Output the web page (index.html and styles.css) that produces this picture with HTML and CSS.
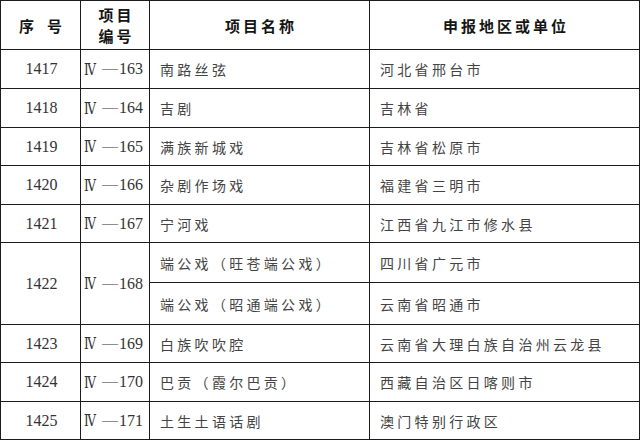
FILE: index.html
```html
<!DOCTYPE html>
<html lang="zh-CN">
<head>
<meta charset="utf-8">
<title>项目名单</title>
<link rel="stylesheet" href="styles.css">
</head>
<body>
<div class="sheet">
  <div class="cell head"><span class="hseq">序</span><span>号</span></div>
  <div class="cell head"><span class="htwo">项目<br>编号</span></div>
  <div class="cell head"><span class="htxt">项目名称</span></div>
  <div class="cell head"><span class="htxt">申报地区或单位</span></div>

  <div class="cell num">1417</div>
  <div class="cell code"><span class="rn">Ⅳ</span><span class="dash">—</span>163</div>
  <div class="cell txt">南路丝弦</div>
  <div class="cell txt">河北省邢台市</div>

  <div class="cell num">1418</div>
  <div class="cell code"><span class="rn">Ⅳ</span><span class="dash">—</span>164</div>
  <div class="cell txt">吉剧</div>
  <div class="cell txt">吉林省</div>

  <div class="cell num">1419</div>
  <div class="cell code"><span class="rn">Ⅳ</span><span class="dash">—</span>165</div>
  <div class="cell txt">满族新城戏</div>
  <div class="cell txt">吉林省松原市</div>

  <div class="cell num">1420</div>
  <div class="cell code"><span class="rn">Ⅳ</span><span class="dash">—</span>166</div>
  <div class="cell txt">杂剧作场戏</div>
  <div class="cell txt">福建省三明市</div>

  <div class="cell num">1421</div>
  <div class="cell code"><span class="rn">Ⅳ</span><span class="dash">—</span>167</div>
  <div class="cell txt">宁河戏</div>
  <div class="cell txt">江西省九江市修水县</div>

  <div class="cell num span2">1422</div>
  <div class="cell code span2"><span class="rn">Ⅳ</span><span class="dash">—</span>168</div>
  <div class="cell txt">端公戏（旺苍端公戏）</div>
  <div class="cell txt">四川省广元市</div>
  <div class="cell txt">端公戏（昭通端公戏）</div>
  <div class="cell txt">云南省昭通市</div>

  <div class="cell num">1423</div>
  <div class="cell code"><span class="rn">Ⅳ</span><span class="dash">—</span>169</div>
  <div class="cell txt">白族吹吹腔</div>
  <div class="cell txt">云南省大理白族自治州云龙县</div>

  <div class="cell num">1424</div>
  <div class="cell code"><span class="rn">Ⅳ</span><span class="dash">—</span>170</div>
  <div class="cell txt">巴贡（霞尔巴贡）</div>
  <div class="cell txt">西藏自治区日喀则市</div>

  <div class="cell num">1425</div>
  <div class="cell code"><span class="rn">Ⅳ</span><span class="dash">—</span>171</div>
  <div class="cell txt">土生土语话剧</div>
  <div class="cell txt">澳门特别行政区</div>
</div>
</body>
</html>
```

FILE: styles.css
```css
html, body {
  margin: 0;
  padding: 0;
  background: #ffffff;
}

.sheet {
  width: 640px;
  box-sizing: border-box;
  display: grid;
  grid-template-columns: 80px 69px 220px 270px;
  grid-template-rows: 49px 39px 39px 38px 39px 38px 40px 42px 38px 39px 38px;
  border-left: 1px solid #1c1c1c;
  border-top: 1px solid #1c1c1c;
  background: #fff;
}

.cell {
  box-sizing: border-box;
  border-right: 1px solid #1c1c1c;
  border-bottom: 1px solid #1c1c1c;
  display: flex;
  align-items: center;
  overflow: hidden;
  white-space: nowrap;
}

.span2 {
  grid-row: span 2;
}

.head {
  justify-content: center;
  font-family: "Noto Sans CJK SC", "Noto Sans", sans-serif;
  font-weight: 700;
  font-size: 15px;
  color: #151515;
}

.hseq {
  margin-right: 13px;
}

.htwo {
  letter-spacing: 3px;
  padding-left: 3px;
  line-height: 21px;
  text-align: center;
}

.htxt {
  letter-spacing: 3px;
  padding-left: 3px;
}

.num {
  justify-content: center;
  font-family: "Liberation Serif", "DejaVu Serif", serif;
  font-size: 16px;
  color: #333;
  padding-left: 2px;
}

.code {
  justify-content: flex-start;
  padding-left: 3px;
  font-family: "Liberation Serif", "DejaVu Serif", serif;
  font-size: 16px;
  color: #333;
}

.rn {
  display: inline-block;
  transform: scaleX(0.75);
  transform-origin: left center;
  margin-right: 2px;
}

.dash {
  display: inline-block;
  width: 14px;
  margin-right: 3px;
  transform: translateY(-1px) scaleY(0.8);
}

.txt {
  padding-left: 10px;
  font-family: "Noto Sans CJK SC", "Noto Sans", sans-serif;
  font-size: 14px;
  letter-spacing: 3.3px;
  color: #444;
}
```
